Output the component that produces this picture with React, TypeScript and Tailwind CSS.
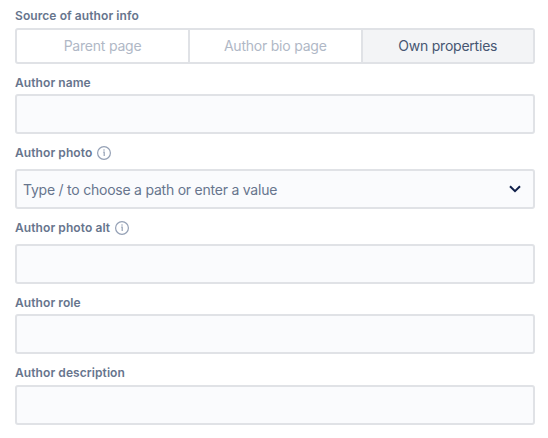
import React from 'react';

function Info() {
  return (
    <svg className="ml-[5px] size-[14px] shrink-0" viewBox="0 0 14 14" fill="none" stroke="#94a0b5" strokeWidth="1.2">
      <circle cx="7" cy="7" r="6.4" />
      <path d="M6.2 6.1H7.2V10" />
      <circle cx="7" cy="3.9" r="0.75" fill="#94a0b5" stroke="none" />
    </svg>
  );
}

function Label({ text, info }: { text: string; info?: boolean }) {
  return (
    <div className="flex h-4 items-center text-[12px] leading-4 font-semibold tracking-[0.08px] whitespace-nowrap text-[#67758d]">
      <span>{text}</span>
      {info && <Info />}
    </div>
  );
}

const box = 'h-[40px] rounded-[3px] border-2 border-[#e0e2e6] bg-[#fafbfd]';

export default function App() {
  return (
    <main className="h-[438px] w-[548px] overflow-hidden bg-white pt-2 pr-[13px] pl-[15px] font-['Inter','Liberation_Sans',sans-serif]">
      <Label text="Source of author info" />
      <div className="mt-1 flex h-9 divide-x-2 divide-[#e0e2e6] rounded-[3px] border-2 border-[#e0e2e6] text-center text-[14px] leading-8 tracking-[-0.22px] text-[#b0b8c6]">
        <div className="w-[173px]">Parent page</div>
        <div className="w-[172.5px]">Author bio page</div>
        <div className="flex-1 bg-[#f3f4f6] text-[#465672]">Own properties</div>
      </div>
      <div className="mt-[11px]"><Label text="Author name" /></div>
      <div className={`mt-[3px] ${box}`} />
      <div className="mt-[11px]"><Label text="Author photo" info /></div>
      <div className={`mt-2 flex items-center justify-between pr-3 pl-[6px] ${box}`}>
        <span className="text-[14px] tracking-[-0.23px] text-[#67758d]">Type / to choose a path or enter a value</span>
        <svg className="h-2 w-3" viewBox="0 0 12 8" fill="none" stroke="#10204a" strokeWidth="2">
          <path d="M1 1.2l5 5 5-5" />
        </svg>
      </div>
      <div className="mt-[11px]"><Label text="Author photo alt" info /></div>
      <div className={`mt-2 ${box}`} />
      <div className="mt-[11px]"><Label text="Author role" /></div>
      <div className={`mt-[3px] ${box}`} />
      <div className="mt-[11px]"><Label text="Author description" /></div>
      <div className={`mt-1 ${box}`} />
    </main>
  );
}
